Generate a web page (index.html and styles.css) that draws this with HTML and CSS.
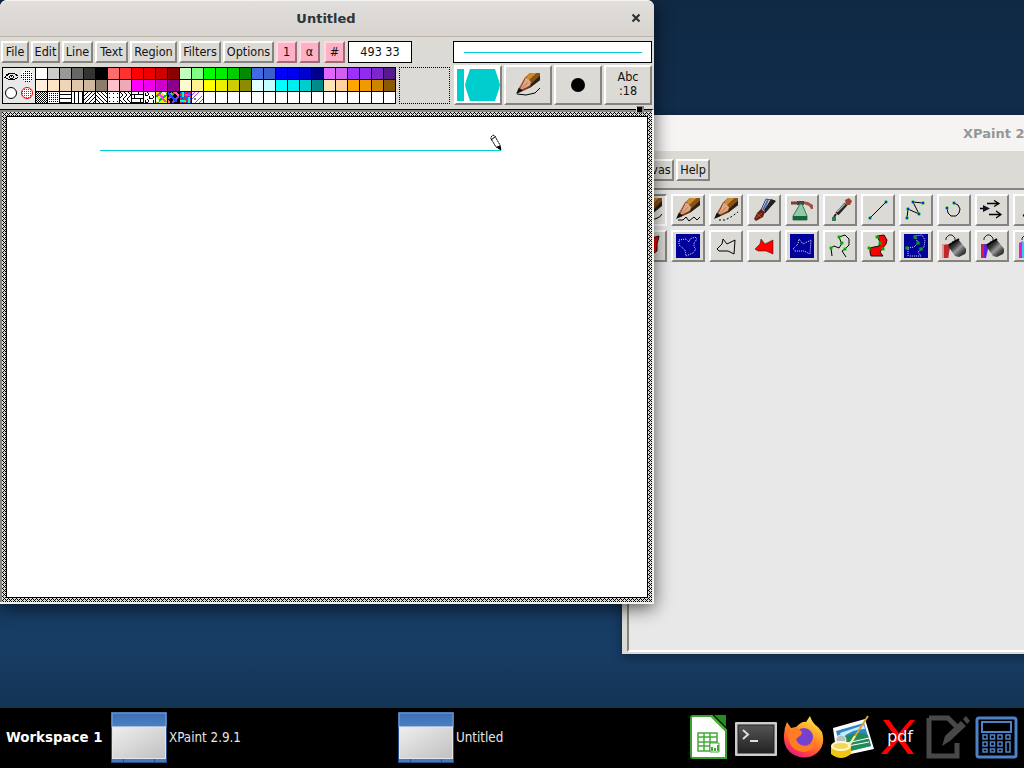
FILE: index.html
```html
<!DOCTYPE html>
<html lang="en">
<head>
<meta charset="utf-8">
<title>Desktop</title>
<link rel="stylesheet" href="styles.css">
</head>
<body>
<svg width="0" height="0" class="defs" aria-hidden="true">
  <defs>
    <linearGradient id="metal" x1="0" y1="0" x2="1" y2="1"><stop offset="0" stop-color="#111"/><stop offset=".35" stop-color="#333"/><stop offset=".55" stop-color="#999"/><stop offset=".75" stop-color="#444"/><stop offset="1" stop-color="#111"/></linearGradient>
    <linearGradient id="winblue" x1="0" y1="0" x2="0" y2="1"><stop offset="0" stop-color="#3c6fb2"/><stop offset="1" stop-color="#4b80c6"/></linearGradient>
    <linearGradient id="wingrey" x1="0" y1="0" x2="1" y2="1"><stop offset="0" stop-color="#eee"/><stop offset="1" stop-color="#c0c0c0"/></linearGradient>
    <linearGradient id="fox" x1=".8" y1="0" x2=".3" y2="1"><stop offset="0" stop-color="#fff44f"/><stop offset=".4" stop-color="#ff9b22"/><stop offset=".75" stop-color="#ff4a3c"/><stop offset="1" stop-color="#e31587"/></linearGradient>
    <linearGradient id="term" x1="0" y1="0" x2="0" y2="1"><stop offset="0" stop-color="#555"/><stop offset="1" stop-color="#222"/></linearGradient>
    <symbol id="pencil" viewBox="0 0 24 24" preserveAspectRatio="none">
      <path d="M9 5 14 0H24V7L14 16 4 21 1 22 2 18Z" fill="#5b3510"/>
      <path d="M10 4 14 0H21L13 8Z" fill="#d08a2e"/><path d="M13 8 21 0H24V3L15 12Z" fill="#8a5219"/><path d="M15 12 24 3V8L14 16Z" fill="#2b2310"/>
      <path d="M9 5 12 6 15 10 14 14 4 19 3 17Z" fill="#e2a57e"/><path d="M9 6 4 17M14 14 5 20" fill="none" stroke="#8b4030"/><path d="M12 10 6 17" stroke="#b97857"/><path d="M0 23 3 16 7 19Z" fill="#111"/>
    </symbol>
    <symbol id="bucket" viewBox="0 0 24 24">
      <path d="M4 12 14 5 23 16 21 20 15 23 11 22Z" fill="url(#metal)"/><path d="M5 11 15 5" stroke="#000" stroke-width="2"/>
      <path d="M2 6V4L5 1H8L11 4V7L8 8" fill="none" stroke="#222"/>
    </symbol>
    <symbol id="taskwin" viewBox="0 0 56 51">
      <rect width="56" height="51" fill="#254f88"/><rect x="1" y="1" width="54" height="14" fill="url(#winblue)" stroke="#7fa5d8"/>
      <rect x="1.5" y="15" width="53" height="31.5" fill="url(#wingrey)" stroke="#e6e6e6"/><path d="M1 48.5H55" stroke="#4679bb" stroke-width="3"/><path d="M12.5 47V50M43.5 47V50" stroke="#254f88"/>
    </symbol>
    <g id="knot"><rect x="-1.5" y="-1.5" width="3" height="3" fill="#00d000"/><rect x="-.5" y="-.5" width="1" height="1" fill="#003000"/></g>
    <g id="dot"><circle r="1.700" fill="#00c81c"/><rect x="-1" y="-1" width="2" height="2" fill="#1030e0"/></g>
  </defs>
</svg>

<main class="desktop">
  <section class="window toolbox">
    <header class="titlebar titlebar-idle"><span class="toolbox-name">XPaint 2.9.1</span></header>
    <nav class="toolbox-menu"><button class="btn w-canvas">Canvas</button><button class="btn w-help">Help</button></nav>
    <div class="tools">
      <div class="tool pressed"><svg viewBox="0 0 24 24"><use href="#pencil" width="24" height="24"/><path d="M2 22Q21 23 24 16" class="ink"/></svg></div>
      <div class="tool"><svg viewBox="0 0 24 24"><use href="#pencil" width="24" height="22"/><path d="M2 22H7L10 19 13 23 18 19 21 22 24 19" class="ink"/></svg></div>
      <div class="tool"><svg viewBox="0 0 24 24"><use href="#pencil" width="24" height="22"/><path d="M5 22H11L17 19 24 14" class="ink" stroke-dasharray="2 2"/></svg></div>
      <div class="tool"><svg viewBox="0 0 24 24"><path d="M14 1 23 3 13 15 9 12Z" fill="#edf0f5" stroke="#313c62"/><path d="M19 1 24 3 13 15 12 12Z" fill="#222"/><path d="M16 2 11 12" stroke="#4668ae" stroke-width="2"/><path d="M9 11 13 14 11 19 4 23 2 21 5 15Z" fill="#602418"/><path d="M4 20 10 15M5 16 9 19" stroke="#c04e24"/></svg></div>
      <div class="tool"><svg viewBox="0 0 24 24"><path d="M11 3 18 4 23 7V11L21 11 19 8 14 6Z" fill="#a35348"/><path d="M1 5H13" stroke="#7c3e38" stroke-width="3"/><path d="M7 5H14" stroke="#444" stroke-width="4"/><path d="M10 6H12L17 18V22H3V18Z" fill="#8fcaa9" stroke="#3e765d"/><path d="M3 18H17V22H3Z" fill="#18643c"/></svg></div>
      <div class="tool"><svg viewBox="0 0 24 24"><path d="M18 6 9 16" stroke="#222" stroke-width="4"/><path d="M17 6 9 14" stroke="#aaa" stroke-width="1.500"/><path d="M17 2 21 0 24 3 22 7 18 7Z" fill="#99452f"/><path d="M8 16 6 19" stroke="#222" stroke-width="2"/><rect x="4" y="19" width="4" height="4" fill="#2d7b52"/></svg></div>
      <div class="tool"><svg viewBox="0 0 24 24"><path d="M4 20 20 4" class="ink"/><use href="#dot" x="4" y="20"/><use href="#dot" x="20" y="4"/></svg></div>
      <div class="tool"><svg viewBox="0 0 24 24"><path d="M3 20 4 11 15 16 9 4 19 5" class="ink"/><use href="#dot" x="3" y="20"/><use href="#dot" x="4" y="11"/><use href="#dot" x="15" y="16"/><use href="#dot" x="9" y="4"/><use href="#dot" x="19" y="5"/></svg></div>
      <div class="tool"><svg viewBox="0 0 24 24"><path d="M12 5 16 7 18 11 17 15 14 18H9L6 15 5 10" class="ink"/><use href="#dot" x="12" y="5"/><use href="#dot" x="5" y="10"/></svg></div>
      <div class="tool"><svg viewBox="0 0 24 24"><path d="M7 5.500H19M14 2.500 19 5.500 14 8.500M9 16.500H21M16 13 21 16.500 16 20M0 10.500H5" class="ink bold"/><path d="M3 7 10 10.500 3 14Z" fill="#111126"/></svg></div>
      <div class="tool"><svg viewBox="0 0 24 24"><path d="M5 18 8 13 12 6 19 18Z" class="ink"/></svg></div>

      <div class="tool"><svg viewBox="0 0 24 24"><path d="M1 3 10 5 21 2 19 10 19 17 13 21 7 18Z" fill="red" stroke="#111"/></svg></div>
      <div class="tool"><svg viewBox="0 0 24 24"><rect width="24" height="24" fill="#00009b"/><path d="M3 6 10 5 13 8 14 5 19 3 21 5 18 9V13L20 15 17 19 10 22 9 16 3 11Z" class="dots"/></svg></div>
      <div class="tool"><svg viewBox="0 0 24 24"><path d="M9 5 13 10 21 6 20 20 14 17 5 17 3 15 8 10Z" class="ink"/></svg></div>
      <div class="tool"><svg viewBox="0 0 24 24"><path d="M9 5 13 10 21 6V20L14 17H6L3 15 8 10Z" fill="red" stroke="#111" stroke-width=".5"/></svg></div>
      <div class="tool"><svg viewBox="0 0 24 24"><rect width="24" height="24" fill="#00009b"/><path d="M9 5 13 10 21 6 20 20 14 17 5 17 3 15 8 10Z" class="dots"/></svg></div>
      <div class="tool"><svg viewBox="0 0 24 24"><path d="M4 22 3 14 6 12 11 14 13 11V8L11 3 17 1 21 5V11L17 15 14 17 18 23" class="ink"/><use href="#knot" x="3" y="14"/><use href="#knot" x="11" y="3"/><use href="#knot" x="14" y="9"/><use href="#knot" x="17" y="15"/></svg></div>
      <div class="tool"><svg viewBox="0 0 24 24"><path d="M4 14 8 13 13 12 14 8 11 2 18 1 21 6 20 10 16 15 14 18 17 22H5L4 18Z" fill="red" stroke="#111"/><use href="#knot" x="3" y="14"/><use href="#knot" x="11" y="3"/><use href="#knot" x="14" y="9"/><use href="#knot" x="17" y="15"/></svg></div>
      <div class="tool"><svg viewBox="0 0 24 24"><rect width="24" height="24" fill="#00009b"/><path d="M4 22V14L10 13 14 9 11 2 18 1 21 6 20 13 14 18 17 22H5" class="dots"/><use href="#knot" x="3" y="14"/><use href="#knot" x="11" y="3"/><use href="#knot" x="14" y="9"/><use href="#knot" x="17" y="15"/></svg></div>
      <div class="tool"><svg viewBox="0 0 24 24"><path d="M0 10H7V24H0Z" fill="#d69a9a"/><path d="M2 11 8 10V14L6 24H2Z" fill="#c2272c"/><use href="#bucket" x="2" width="24" height="24"/></svg></div>
      <div class="tool"><svg viewBox="0 0 24 24"><path d="M1 10H5V24H1Z" fill="#d61855"/><path d="M4 10H8V15L6 24H4Z" fill="#5a22dd"/><use href="#bucket" x="2" width="24" height="24"/></svg></div>
      <div class="tool"><svg viewBox="0 0 24 24"><path d="M1 9 5 7V24H1Z" fill="#e619cc"/><path d="M4 8H7V24H4Z" fill="#3ce"/><use href="#bucket" x="2" width="24" height="24"/></svg></div>
    </div>
  </section>

  <section class="window painter">
    <header class="titlebar"><span class="painter-name">Untitled</span>
      <svg class="close" viewBox="0 0 10 10"><path d="M1.500 1.500 8.500 8.500M8.500 1.500 1.500 8.500"/></svg></header>
    <nav class="menu">
      <button class="btn w-file">File</button><button class="btn w-edit">Edit</button><button class="btn w-line">Line</button><button class="btn w-text">Text</button><button class="btn w-region">Region</button><button class="btn w-filters">Filters</button><button class="btn w-options">Options</button><button class="btn pink">1</button><button class="btn pink">α</button><button class="btn pink grid-toggle">#</button>
      <output class="coords">493 33</output>
      <div class="line-preview"><span class="stroke"></span></div>
    </nav>
    <div class="controls">
      <div class="palette">
        <svg class="modes" viewBox="0 0 32 35">
          <g shape-rendering="crispEdges" fill="#000"><path d="M5 5H12V6H5ZM3 6H6V7H3ZM12 6H14V7H12ZM2 8H3V9H2ZM3 7H5V8H3ZM13 7H15V8H13ZM1 9H3V10H1ZM14 9H15V10H14ZM5 11H12V12H5ZM3 10H5V11H3ZM12 10H14V11H12ZM7 7H10V8H7ZM6 8H7V10H6ZM10 8H11V10H10ZM8 8H9V9H8ZM7 10H10V11H7Z"/></g>
          <circle cx="24" cy="7.500" r="6" fill="#fff"/><path d="M22 3H28M20 5H30M18 7H30M18 9H30M20 11H30M22 13H28" stroke="#000" stroke-dasharray="1 1" shape-rendering="crispEdges"/>
          <circle cx="8" cy="25" r="5.500" fill="#fff" stroke="#000"/><circle cx="24" cy="25" r="5.500" fill="#fff" stroke="red"/><path d="M21 21.500H28M19 23.500H29M19 25.500H29M19 27.500H29M21 29.500H28" stroke="red" stroke-dasharray="1 1" shape-rendering="crispEdges"/>
        </svg>
        <div class="swatches" id="swatches"></div>
      </div>
      <div class="dropzone"></div>
      <div class="quick">
        <div class="big white"><svg viewBox="0 0 44 36"><path d="M1 2H8V34H1ZM14 2H39L43 14 44 18 43 22 39 34H14L10 22 9 18 10 14Z" fill="#00cdcd"/></svg></div>
        <div class="big"><svg viewBox="0 0 44 36"><use href="#pencil" x="10" y="6" width="24" height="22"/><path d="M11 27 20 28 29 26 34 21" class="ink"/></svg></div>
        <div class="big"><svg viewBox="0 0 44 36"><circle cx="22" cy="18" r="7"/></svg></div>
        <div class="big font-sample">Abc<br>:18</div>
      </div>
    </div>
    <div class="workspace"><i class="grip"></i>
      <div class="hatch"><svg class="canvas" viewBox="0 0 640 480"><path d="M93 33.500H494" stroke="#00cdcd"/>
        <g transform="translate(483 18)"><path d="M1 2 3 0 5 1 7 5 10 10V14L6 12 3 7 1 4Z" fill="#fff" stroke="#000" stroke-dasharray="2 .5"/><path d="M1 5 5 2" stroke="#000"/><path d="M7 12 10 11 11 15Z" fill="#000" stroke="#000"/></g></svg></div>
    </div>
  </section>

  <footer class="taskbar">
    <b class="workspace-name">Workspace 1</b>
    <div class="task"><svg viewBox="0 0 56 51"><use href="#taskwin"/></svg><span>XPaint 2.9.1</span></div>
    <div class="task"><svg viewBox="0 0 56 51"><use href="#taskwin"/></svg><span>Untitled</span></div>
    <div class="launchers">
      <svg viewBox="-4 0 44 44"><path d="M3 1H22L36 15V43H3Q1 43 1 41V3Q1 1 3 1Z" fill="#fff" stroke="#35a42a" stroke-width="2"/><path d="M24 0H36V12Z" fill="#248c20"/><path d="M21 1 36 16" stroke="#43b52d" stroke-width="2"/><path d="M8 18H27V36H8ZM8 22H27M8 27H27M8 31H27M14 18V36M20 18V36" fill="none" stroke="#43aa38" stroke-width="1.500"/><path d="M20 28H29V37H20Z" fill="#fff" stroke="#43aa38"/><path d="M22 36V32M25 36V33M28 36V30" stroke="#43aa38" stroke-width="2"/></svg>
      <svg viewBox="0 0 44 44"><rect x="1" y="7" width="42" height="34" rx="1" fill="#ccc"/><rect x="4" y="10" width="36" height="28" fill="url(#term)" stroke="#222"/><path d="M9 15 14 19.500 9 24" stroke="#ddd" stroke-width="2" fill="none"/><path d="M16 26H24" stroke="#ddd" stroke-width="2"/></svg>
      <svg viewBox="0 0 44 44"><path d="M5 7 9 13 14 12Q20 6 24 7L28 1Q30 8 36 12L40 17Q44 30 35 38 25 46 12 40 1 34 2 20 2 13 5 7Z" fill="url(#fox)"/><circle cx="22" cy="22" r="9" fill="#7542cf"/><path d="M4 9 10 15 14 12 20 17 19 20 14 24Q16 31 24 31 32 31 33 24 34 36 22 37 9 36 7 25Z" fill="#ff7c24"/></svg>
      <svg viewBox="0 0 44 44"><path d="M3 13 35 4 44 34 7 42Z" fill="#fff"/><path d="M6 16 34 8 41 31 12 38Z" fill="#2f86cc"/><path d="M15 22Q28 15 38 20L41 31 12 38Z" fill="#218b59"/><path d="M10 18 34 10 35 14Q22 14 12 23Z" fill="#c5ebff"/><path d="M17 28 39 23M18 31 39 27" stroke="#fff"/><circle cx="11" cy="25" r="5" fill="#b7c1bd" stroke="#eee"/><path d="M1 30H21V39Q11 47 1 39Z" fill="#f0c514"/><ellipse cx="11" cy="31" rx="9" ry="4" fill="#f3d75c" stroke="#fff8ce" stroke-width="2"/><path d="M20 29 38 1" stroke="#d9a62b" stroke-width="2"/><path d="M18 32 25 21" stroke="#fff1b6" stroke-width="2"/></svg>
      <svg viewBox="-1 0 44 44"><path d="M4 5H10L35 39H29ZM31 5H36L8 39H2Z" fill="red"/><text x="21" y="27" text-anchor="middle" class="pdf">pdf</text></svg>
      <svg viewBox="0 0 44 44"><path d="M3 3H22L31 12M31 28V41H3V3" fill="none" stroke="#484848" stroke-width="5"/><path d="M17 28 19 21 35 6 40 11 24 26 16 31Z" fill="#484848"/><path d="M37 4 40 1 44 6 41 9Z" fill="#484848"/></svg>
      <svg viewBox="0 0 44 44"><g fill="none" stroke="#4d82c8" stroke-width="2"><rect x="3" y="3" width="39" height="39" rx="2" stroke-width="3"/><rect x="8" y="7" width="29" height="10"/><path d="M9 20H13V24H9ZM16.500 20H20.500V24H16.500ZM24 20H28V24H24ZM32 20H36V24H32ZM9 27H13V31H9ZM16.500 27H20.500V31H16.500ZM24 27H28V31H24ZM9 34H13V37H9ZM16.500 34H20.500V37H16.500ZM24 34H28V37H24ZM32 27H36V37H32Z" stroke-width="1.500"/></g></svg>
    </div>
  </footer>
</main>
<script src="palette.js"></script>
</body>
</html>
```
FILE: styles.css
```css
*{box-sizing:border-box}
body{margin:0;font:12.5px "DejaVu Sans Condensed","DejaVu Sans",sans-serif;font-stretch:condensed;color:#111}
.defs{position:absolute}
.desktop{position:relative;width:1024px;height:768px;overflow:hidden;background:linear-gradient(#0f2944 0,#15355a 50%,#173d65 85%,#143454 92%)}
.window{position:absolute;display:flex;flex-direction:column;background:#dcdad5}
.painter{left:0;top:0;width:654px;height:604px;border-radius:7px 7px 0 0;box-shadow:0 4px 18px rgba(0,0,0,.65)}
.toolbox{left:622px;top:115px;width:760px;height:539px;box-shadow:0 3px 10px rgba(0,0,0,.4)}
.titlebar{flex:none;height:37px;display:flex;align-items:center;font:bold 13px "DejaVu Sans",sans-serif;font-stretch:normal;color:#2e3436;background:linear-gradient(#e1dedb,#d8d4d0);border-bottom:1px solid #beb4ab;border-top:1px solid #f5f4f2;border-radius:7px 7px 0 0}
.painter-name{width:652px;text-align:center}
.close{width:10px;height:10px;margin:-2px 13px 0 -21px;flex:none;fill:none;stroke:#2e3436;stroke-width:2.2}
.titlebar-idle{height:36px;background:#f5f4f3;border:0;color:#949797}
.toolbox-name{padding-left:341px}
.btn{font:inherit;color:#111;background:#dcdad5;border:2px solid;border-color:#fff #84837f #84837f #fff;padding:0 0 1px;height:22px;text-align:center;white-space:nowrap;overflow:hidden;flex:none}
.menu{display:flex;gap:2px;margin:4px 0 0 1px;height:22px;flex:none}
.w-file{width:28px}.w-edit{width:29px}.w-line{width:31px}.w-text{width:33px}.w-region{width:47px}.w-filters{width:42px}.w-options{width:51px}
.pink{width:21px;background:#ffb0c4;border-color:#ffd8e4 #9a6b78 #9a6b78 #ffd8e4}
.grid-toggle{margin-left:2px}
.coords{width:64px;margin-left:1px;border:1px solid #000;background:#fff;text-align:center;line-height:19px}
.line-preview{width:199px;margin-left:39px;border:1px solid #000;background:#fff;padding:10px 9px 0 10px}
.stroke{display:block;height:1px;background:#00cdcd}
.controls{display:flex;height:46px;flex:none;padding:2px 0 0 2px}
.palette{display:flex;width:394px;height:37px;margin-top:2px;border:1px solid #000;background:#000}
.modes{width:32px;height:35px;background:#e8e8e8}
.swatches{display:grid;grid-template-columns:repeat(30,11px);grid-auto-rows:11px;gap:1px;padding-left:1px}
.swatches svg{width:11px;height:11px;background:#fff;display:block}
.dropzone{width:51px;height:37px;margin:2px 0 0 3px;border:1px dotted #000}
.quick{display:flex;gap:2px;margin-left:4px}
.big{width:48px;height:40px;background:#dcdad5;border:2px solid;border-color:#fff #84837f #84837f #fff;display:block}
.big svg{display:block;width:44px;height:36px}
.white{background:#fff}
.font-sample{text-align:center;line-height:14px;padding-top:3px}
.workspace{position:relative;height:495px;border-top:1px solid #000;background:#8a8985;padding:2px 0 0 2px;border-right:2px solid #f3f3f0;border-bottom:2px solid #f3f3f0}
.grip{position:absolute;left:636px;top:-4px;width:8px;height:7px;background:#000;border:solid #84837f;border-width:1px 2px 1px 1px;border-left-color:#dcdad5}
.hatch{padding:4px;width:650px;height:490px;background:#dcdad5 url("data:image/svg+xml,%3Csvg xmlns='http://www.w3.org/2000/svg' width='4' height='4' shape-rendering='crispEdges'%3E%3Cpath d='M0 0h1v1H0zM1 1h1v1H1zM3 1h1v1H3zM2 2h1v1H2zM1 3h1v1H1zM3 3h1v1H3z'/%3E%3C/svg%3E")}
.canvas{display:block;width:642px;height:482px;border:1px solid #000;background:#fff}
.toolbox-menu{display:flex;gap:2px;height:39px;padding:8px 0 0 4px;flex:none;border-bottom:2px solid #84837f}
.w-canvas{width:48px}.w-help{width:34px}
.tools{flex:1;display:grid;grid-template-columns:repeat(11,34px);grid-auto-rows:32px;gap:4px;align-content:start;padding:4px 0 0 4px;margin:0 0 2px 5px;background:#e8e8e8;border-left:2px solid #84837f;border-bottom:2px solid #fff}
.tool{background:#dcdad5;border:2px solid;border-color:#fff #84837f #84837f #fff;padding:2px 3px}
.tool svg{display:block;width:24px;height:24px}
.pressed{background:#e8e7e3;border-color:#84837f #fff #fff #84837f}
.ink{fill:none;stroke:#000;stroke-width:1}
.bold{stroke-width:1.3}
.dots{fill:none;stroke:#e1e1ff;stroke-width:1;stroke-dasharray:1 1}
.taskbar{position:absolute;left:0;right:0;bottom:0;height:60px;padding-bottom:2px;background:#000;color:#fff;display:flex;align-items:center}
.workspace-name{width:111px;padding-left:6px;font:bold 13.4px "DejaVu Sans",sans-serif;white-space:nowrap}
.task{display:flex;align-items:center;width:287px;gap:2px;font-size:13.3px;color:#e5e5e5}
.task svg{width:56px;height:51px}
.launchers{display:flex;gap:4px;margin-left:1px}
.launchers svg{width:44px;height:44px;flex:none}
.pdf{font:16.5px "Open Sans",sans-serif;fill:#fff}
```
FILE: palette.js
```js
const rows = [
  "#fff #ccc #999 #666 #333 #000 #ff6b6b #ff3232 #f00 #e00 #cd0000 #8b0000 #c1ffc1 #80ff80 #0f0 #0e0 #00cd00 #008b00 #4169e1 #3a5fcd #00f #00e #0000cd #00008b #e066ff #d15fee #9b30ff #912cee #7d26cd #551a8b",
  "#ffefdb #ffe4c4 #eed5b7 #dec6aa #cdb79e #8b7d6b #ffc0cb #eea9b8 #f0f #e0e #cd00cd #8b008b #fffacd #fff090 #ff0 #ee0 #cdcd00 #8b8b00 #e0ffff #bfffff #0ff #0ee #00cdcd #008b8b #ffe4b5 #ffd39b #ffa500 #ee9a00 #cd8500 #8b5a00"
];
const box = document.getElementById("swatches");
for (const row of rows) {
  for (const color of row.split(" ")) {
    const cell = document.createElement("span");
    cell.style.background = color;
    box.append(cell);
  }
}

// Repeating pixels: horizontal step, vertical step, offset on odd rows
function dots(dx, dy, shift, color, from = 0) {
  let d = "";
  for (let y = from, r = 0; y < 11; y += dy, r++)
    for (let x = from + (r % 2 ? shift : 0); x < 11; x += dx) d += `M${x} ${y}h1v1h-1z`;
  return `<path d="${d}" fill="${color || "#000"}"/>`;
}
const line = (d, color, w) => `<path d="${d}" fill="none" stroke="${color || "#000"}" stroke-width="${w || 1}"/>`;
const slant = "M0 4 4 0M0 8 8 0M1 11 11 1M5 11 11 5M9 11 11 9";
const patterns = [
  dots(2, 1, 1), dots(2, 2, 0, "#000", 1),
  line("M0 2.5H11M0 6.500H11M0 10.500H11"),
  line("M2.500 0V11M6.500 0V11M10.500 0V11"),
  line(slant),
  line("M0 7 4 11M0 3 8 11M1 0 11 10M5 0 11 6M9 0 11 2"),
  dots(4, 4, 0, "#000", 1),
  line("M0 0 3 3 0 6M4 0 7 3 3 7 7 11M8 0 11 3 7 7 11 11M0 8 3 11"),
  line("M0 2.500H11M0 6.500H11M0 10.500H11M6.500 0V2M2.500 3V6M8.500 7V10"),
  line("M3 0 5 2 3 4 1 3V1M8 3 10 5 8 7 5 6V4M3 7 5 9 3 11 1 10V8M9 8V11"),
  '<path d="M0 0H11V11H0Z" fill="#ee0"/>' + line("M0 5 5 0M1 11 11 2", "#0b3", 2) + line("M3 2 10 10", "#e4e", 2) + line("M7 0 10 3M0 7 3 10", "#fff", 2),
  '<path d="M0 0H11V11H0Z"/>' + line("M0 7 7 0M4 11 11 4", "#93f", 2) + line("M0 1 9 10", "#24f", 2) + line("M7 0 11 4M0 9 2 11", "#f6a", 2) + line("M3 1 5 3", "#1d3", 2),
  '<path d="M0 0H11V11H0Z" fill="#e21"/>' + dots(4, 2, 2, "#04f") + line("M2.500 0V5M8.500 5V11M0 8.500H6", "#0fc", 2) + line("M5 2.500H10", "#e2e", 2),
  line("M0 3 3 0M0 7 7 0", "#a3f") + line("M3 11 10 4M7 11 11 7", "#f33") + '<path d="M2 6H4V8H2Z" fill="#1c2"/>'
];
for (let i = 0; i < 30; i++) {
  box.insertAdjacentHTML("beforeend", `<svg viewBox="0 0 11 11" shape-rendering="crispEdges">${patterns[i] || ""}</svg>`);
}
```
